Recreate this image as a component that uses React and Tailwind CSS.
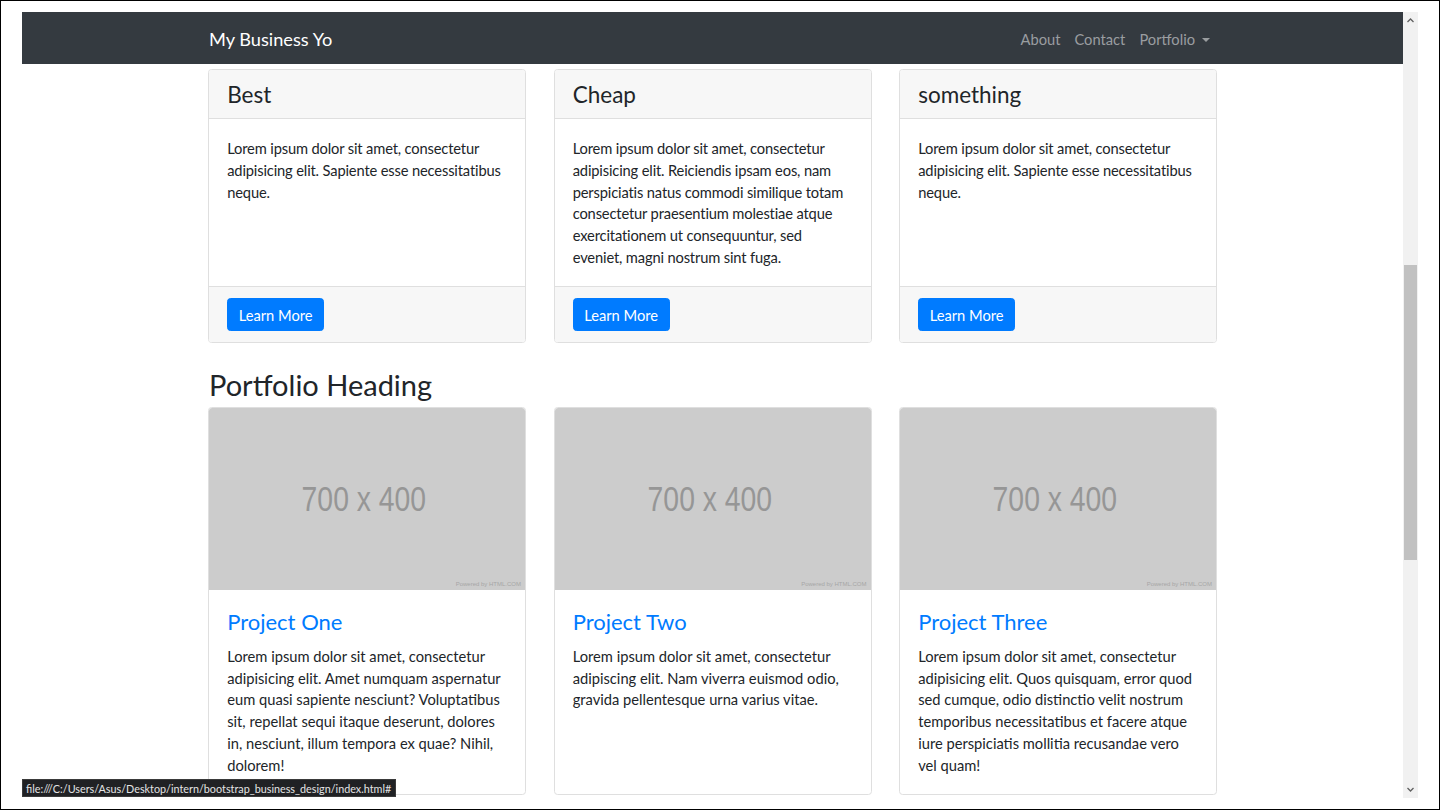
const features = [
  {
    title: "Best",
    text: "Lorem ipsum dolor sit amet, consectetur adipisicing elit. Sapiente esse necessitatibus neque.",
  },
  {
    title: "Cheap",
    text: "Lorem ipsum dolor sit amet, consectetur adipisicing elit. Reiciendis ipsam eos, nam perspiciatis natus commodi similique totam consectetur praesentium molestiae atque exercitationem ut consequuntur, sed eveniet, magni nostrum sint fuga.",
  },
  {
    title: "something",
    text: "Lorem ipsum dolor sit amet, consectetur adipisicing elit. Sapiente esse necessitatibus neque.",
  },
];

const projects = [
  {
    title: "Project One",
    text: "Lorem ipsum dolor sit amet, consectetur adipisicing elit. Amet numquam aspernatur eum quasi sapiente nesciunt? Voluptatibus sit, repellat sequi itaque deserunt, dolores in, nesciunt, illum tempora ex quae? Nihil, dolorem!",
  },
  {
    title: "Project Two",
    text: "Lorem ipsum dolor sit amet, consectetur adipiscing elit. Nam viverra euismod odio, gravida pellentesque urna varius vitae.",
  },
  {
    title: "Project Three",
    text: "Lorem ipsum dolor sit amet, consectetur adipisicing elit. Quos quisquam, error quod sed cumque, odio distinctio velit nostrum temporibus necessitatibus et facere atque iure perspiciatis mollitia recusandae vero vel quam!",
  },
];

const Placeholder = () => (
  <div className="relative h-[181.7px] bg-[#cccccc] flex items-center justify-center rounded-t-[3px]">
    <span className="font-['Liberation_Sans',sans-serif] text-[35px] leading-none text-[#969696] scale-x-[0.81] -translate-x-[3px] whitespace-nowrap">
      700 x 400
    </span>
    <span className="absolute right-[4px] bottom-[3px] text-[6px] leading-none text-[#a6a6a6] font-['Liberation_Sans',sans-serif]">
      Powered by HTML.COM
    </span>
  </div>
);

const Arrow = ({ down }) => (
  <svg width="7" height="5" viewBox="0 0 7 5" className={down ? "rotate-180" : ""}>
    <polyline points="0.5,4 3.5,1 6.5,4" fill="none" stroke="#606060" strokeWidth="1.3" />
  </svg>
);

export default function App() {
  return (
    <div className="w-[1440px] h-[810px] bg-white border border-black overflow-hidden font-['Lato','Noto_Sans',sans-serif] text-[#212529]">
      <div className="ml-[21px] mt-[11px] flex w-[1396px] h-[786px]">
        {/* browser viewport */}
        <div className="relative w-[1381px] h-full overflow-hidden flex flex-col">
          {/* navbar */}
          <nav className="h-[51.5px] shrink-0 bg-[#343a40]">
            <div className="w-[1009px] mx-auto h-full flex items-center justify-between">
              <span className="text-[18.2px] text-white pl-[1px] pt-[4px]">My Business Yo</span>
              <div className="flex items-center text-[14.7px] text-[#9a9da0] pt-[3px]">
                <span className="px-[7px]">About</span>
                <span className="px-[7px]">Contact</span>
                <span className="px-[7px] flex items-center">
                  Portfolio
                  <span className="ml-[7px] mt-[1px] w-0 h-0 border-l-[4.5px] border-r-[4.5px] border-t-[4.5px] border-l-transparent border-r-transparent border-t-[#9a9da0]" />
                </span>
              </div>
            </div>
          </nav>

          <main className="w-[1009px] mx-auto pt-[5.5px]">
            {/* feature cards */}
            <div className="grid grid-cols-3 gap-x-[27.5px]">
              {features.map((f, i) => (
                <div key={i} className="flex flex-col border border-[#dfdfdf] rounded-[3.6px] overflow-hidden">
                  <div className="bg-[#f7f7f7] border-b border-[#dfdfdf] px-[18.2px] h-[48.5px] flex items-center">
                    <h4 className="text-[22.5px] leading-[26px] pt-[2px]">{f.title}</h4>
                  </div>
                  <div className="flex-1 px-[18.2px] pt-[19.5px] pb-[17.5px] text-[14.7px] leading-[21.8px] tracking-[-0.15px]">
                    {f.text}
                  </div>
                  <div className="bg-[#f7f7f7] border-t border-[#dfdfdf] px-[18.2px] py-[11px]">
                    <button className="bg-[#007bff] border border-[#007bff] text-white text-[14.7px] leading-[22px] px-[10.5px] py-[4.5px] rounded-[3.6px]">
                      Learn More
                    </button>
                  </div>
                </div>
              ))}
            </div>

            <h2 className="mt-[21.8px] mb-[5px] pt-[2px] text-[29px] leading-[35px] pl-[1px]">Portfolio Heading</h2>

            {/* portfolio cards */}
            <div className="grid grid-cols-3 gap-x-[27.5px]">
              {projects.map((p, i) => (
                <div key={i} className="border border-[#dfdfdf] rounded-[3.6px] overflow-hidden">
                  <Placeholder />
                  <div className="px-[18.2px] pt-[18.2px] pb-[17px]">
                    <h4 className="text-[22px] leading-[26px] text-[#007bff] mb-[10.9px] pt-[1px]">{p.title}</h4>
                    <p className="text-[14.7px] leading-[21.8px]">{p.text}</p>
                  </div>
                </div>
              ))}
            </div>
          </main>

          {/* status bar */}
          <div className="absolute left-0 bottom-[1px] h-[18px] bg-[#202124] text-[#e4e4e4] text-[10.8px] leading-[17px] pl-[3px] pr-[4px] border border-[#3a3a3a]">
            file:///C:/Users/Asus/Desktop/intern/bootstrap_business_design/index.html#
          </div>
        </div>

        {/* scrollbar */}
        <div className="w-[15px] h-full bg-[#f1f1f1] flex flex-col items-center">
          <div className="h-[17px] flex items-center justify-center">
            <Arrow />
          </div>
          <div className="h-[236px]" />
          <div className="w-[13px] h-[295px] bg-[#c1c1c1]" />
          <div className="flex-1" />
          <div className="h-[17px] flex items-center justify-center">
            <Arrow down />
          </div>
        </div>
      </div>
    </div>
  );
}
